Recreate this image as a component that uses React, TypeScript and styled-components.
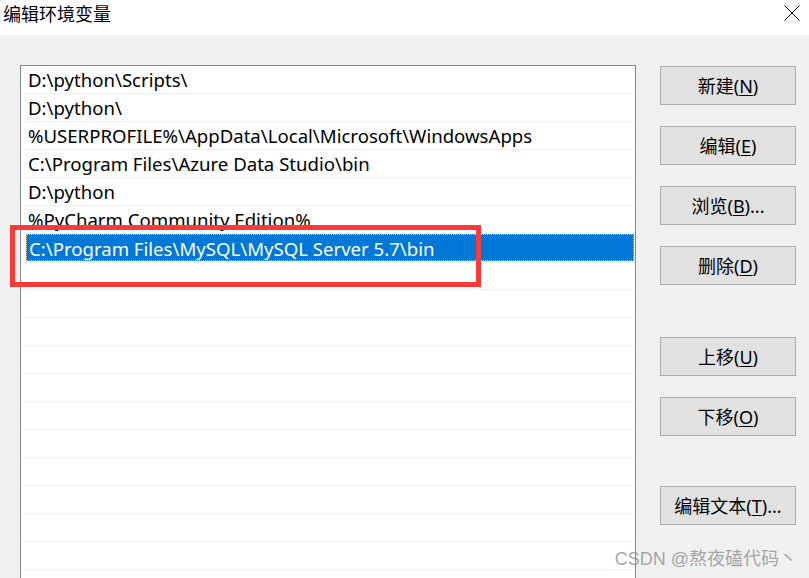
import React from "react";
import styled, { createGlobalStyle } from "styled-components";

const GlobalStyle = createGlobalStyle`
  html, body { margin: 0; padding: 0; background: #f0f0f0; overflow: hidden; }
  * { box-sizing: border-box; }
`;

const FONT = `"Noto Sans", "Noto Sans CJK SC", sans-serif`;

const Window = styled.div`
  position: relative;
  width: 809px;
  height: 578px;
  overflow: hidden;
  background: #f0f0f0;
  font-family: ${FONT};
  color: #000;
`;

const TitleBar = styled.div`
  height: 35px;
  background: #fff;
  display: flex;
  justify-content: space-between;
  align-items: flex-start;
`;

const Title = styled.div`
  padding: 1px 0 0 3px;
  font-size: 18px;
  line-height: 24px;
  font-family: "Noto Sans CJK SC", sans-serif;
`;

const CloseIcon = styled.svg`
  margin: 5px 9px 0 0;
  width: 16px;
  height: 16px;
`;

const Body = styled.div`
  display: flex;
  padding: 30px 0 0 20px;
  gap: 24px;
`;

const ListBox = styled.div`
  width: 616px;
  height: 560px;
  background: #fff;
  border: 1px solid #828790;
  padding: 0 1px 0 1px;
  display: flex;
  flex-direction: column;
`;

const Row = styled.div<{ $selected?: boolean }>`
  height: 28px;
  flex: none;
  border-bottom: 1px solid #f0f0f0;
  padding: ${(p) => (p.$selected ? "0 0 1px 4px" : "0")};
  display: flex;
`;

const RowInner = styled.div<{ $selected?: boolean }>`
  flex: 1;
  height: 27px;
  padding: 1px 0 0 ${(p) => (p.$selected ? "2px" : "6px")};
  font-size: 18.6px;
  line-height: 26px;
  white-space: nowrap;
  overflow: hidden;
  background: ${(p) => (p.$selected ? "#0078d7" : "transparent")};
  color: ${(p) => (p.$selected ? "#fff" : "#000")};
  border: ${(p) => (p.$selected ? "1px dotted #f0c090" : "none")};
`;

const ButtonColumn = styled.div`
  display: flex;
  flex-direction: column;
  padding-top: 1px;
`;

const Button = styled.div<{ $gap: number }>`
  width: 136px;
  height: 39px;
  margin-top: ${(p) => p.$gap}px;
  background: #e1e1e1;
  border: 1px solid #adadad;
  display: flex;
  align-items: center;
  justify-content: center;
  font-size: 18px;
  line-height: 22px;
  font-family: ${FONT};
  white-space: nowrap;
`;

const U = styled.span`
  text-decoration: underline;
  text-underline-offset: 2px;
  text-decoration-thickness: 1px;
`;

const Highlight = styled.div`
  position: absolute;
  left: 10px;
  top: 225px;
  width: 471px;
  height: 62px;
  border: 5px solid #fc3a3a;
  pointer-events: none;
`;

const Watermark = styled.div`
  position: absolute;
  right: 12px;
  bottom: 8px;
  font-size: 18px;
  line-height: 22px;
  color: rgba(150, 150, 150, 0.85);
  font-family: "Liberation Sans", "Noto Sans CJK SC", sans-serif;
  white-space: nowrap;
`;

const entries = [
  "D:\\python\\Scripts\\",
  "D:\\python\\",
  "%USERPROFILE%\\AppData\\Local\\Microsoft\\WindowsApps",
  "C:\\Program Files\\Azure Data Studio\\bin",
  "D:\\python",
  "%PyCharm Community Edition%",
  "C:\\Program Files\\MySQL\\MySQL Server 5.7\\bin",
];

const TOTAL_ROWS = 20;

const buttons: { label: string; key: string; tail: string; gap: number }[] = [
  { label: "新建(", key: "N", tail: ")", gap: 0 },
  { label: "编辑(", key: "E", tail: ")", gap: 21 },
  { label: "浏览(", key: "B", tail: ")...", gap: 21 },
  { label: "删除(", key: "D", tail: ")", gap: 21 },
  { label: "上移(", key: "U", tail: ")", gap: 52 },
  { label: "下移(", key: "O", tail: ")", gap: 21 },
  { label: "编辑文本(", key: "T", tail: ")...", gap: 50 },
];

export default function App() {
  const rows = Array.from({ length: TOTAL_ROWS }, (_, i) => entries[i] ?? "");
  return (
    <Window>
      <GlobalStyle />
      <TitleBar>
        <Title>编辑环境变量</Title>
        <CloseIcon viewBox="0 0 16 16">
          <path d="M0.5 0.5 L15.5 15.5 M15.5 0.5 L0.5 15.5" stroke="#000" strokeWidth="1" fill="none" />
        </CloseIcon>
      </TitleBar>
      <Body>
        <ListBox>
          {rows.map((text, i) => {
            const selected = i === 6;
            return (
              <Row key={i} $selected={selected}>
                <RowInner $selected={selected}>{text}</RowInner>
              </Row>
            );
          })}
        </ListBox>
        <ButtonColumn>
          {buttons.map((b) => (
            <Button key={b.key} $gap={b.gap}>
              {b.label}
              <U>{b.key}</U>
              {b.tail}
            </Button>
          ))}
        </ButtonColumn>
      </Body>
      <Highlight />
      <Watermark>CSDN @熬夜磕代码丶</Watermark>
    </Window>
  );
}
